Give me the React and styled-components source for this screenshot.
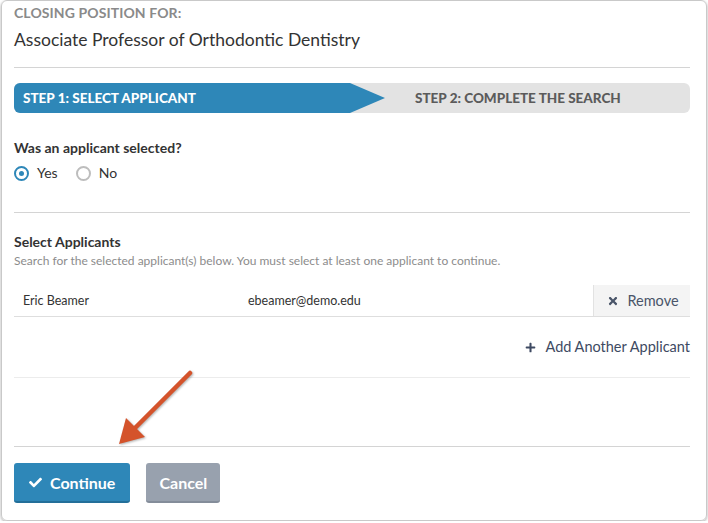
import React from 'react'
import styled, { createGlobalStyle } from 'styled-components'
import { FaCheck, FaTimes, FaPlus } from 'react-icons/fa'

const GlobalStyle = createGlobalStyle`
    body {
        margin: 0;
        background: #ffffff;
        font-family: Lato, "Open Sans", sans-serif;
        color: #333;
    }
`

const Card = styled.div`
    position: relative;
    box-sizing: border-box;
    width: 706px;
    height: 521px;
    margin-left: 1px;
    border: 1px solid #c9c9c9;
    border-radius: 6px;
    box-shadow: 0 1px 3px rgba(0, 0, 0, 0.35);
    padding: 4px 16px 0 12px;
    display: flex;
    flex-direction: column;
`

const Eyebrow = styled.div`
    font-size: 14px;
    font-weight: 700;
    color: #8a8a8a;
    line-height: 16px;
    letter-spacing: 0.1px;
`

const Title = styled.h1`
    margin: 8px 0 0;
    font-size: 17.5px;
    font-weight: 400;
    line-height: 22px;
    color: #333;
`

const Rule = styled.hr`
    border: none;
    border-top: 1px solid ${p => p.light ? '#ececec' : '#d4d4d4'};
    margin: ${p => p.mt}px 0 0;
`

const Steps = styled.div`
    margin-top: 15px;
    height: 30px;
    background: #e3e3e3;
    border-radius: 6px;
    overflow: hidden;
    display: flex;
    align-items: center;
`

const ActiveStep = styled.div`
    height: 100%;
    width: 371px;
    background: #2e87b8;
    clip-path: polygon(0 0, 336px 0, 100% 50%, 336px 100%, 0 100%);
    display: flex;
    align-items: center;
    padding-left: 9px;
    box-sizing: border-box;
    font-size: 13.5px;
    font-weight: 900;
    color: #fff;
`

const NextStep = styled.div`
    padding-left: 30px;
    font-size: 13.5px;
    font-weight: 900;
    color: #5b5b5b;
`

const Question = styled.div`
    margin-top: 26px;
    font-size: 14px;
    font-weight: 700;
    line-height: 18px;
    color: #333;
`

const Radios = styled.div`
    margin-top: 7px;
    display: flex;
    gap: 18px;
`

const RadioLabel = styled.label`
    display: flex;
    align-items: center;
    gap: 8px;
    font-size: 14px;
    line-height: 18px;
    color: #333;
`

const Dot = styled.span`
    box-sizing: border-box;
    width: 15px;
    height: 15px;
    border-radius: 50%;
    border: 2px solid ${p => p.checked ? '#2e87b8' : '#bdbdbd'};
    display: flex;
    align-items: center;
    justify-content: center;

    &::after {
        content: '';
        width: 5px;
        height: 5px;
        border-radius: 50%;
        background: ${p => p.checked ? '#2e87b8' : 'transparent'};
    }
`

const SectionTitle = styled.div`
    margin-top: 20px;
    font-size: 14px;
    font-weight: 700;
    line-height: 18px;
    color: #333;
`

const Hint = styled.div`
    margin-top: 3px;
    font-size: 12px;
    line-height: 14px;
    color: #8c8c8c;
`

const ApplicantRow = styled.div`
    margin-top: 17px;
    height: 31px;
    display: grid;
    grid-template-columns: 234px 1fr 97px;
    align-items: stretch;
    border-bottom: 1px solid #dedede;
    font-size: 12.5px;
    color: #333;
`

const Cell = styled.div`
    display: flex;
    align-items: center;
    padding-left: ${p => p.pad || 0}px;
`

const RemoveCell = styled.button`
    border: none;
    border-left: 1px solid #e2e2e2;
    background: #f4f4f4;
    display: flex;
    align-items: center;
    justify-content: center;
    gap: 8px;
    font-family: inherit;
    font-size: 14.5px;
    color: #4a5569;
    padding: 0 0 0 2px;

    svg {
        width: 12px;
        height: 12px;
    }
`

const AddLink = styled.div`
    margin-top: 21px;
    align-self: flex-end;
    display: flex;
    align-items: center;
    gap: 9px;
    font-size: 14.5px;
    line-height: 18px;
    color: #3e4a62;

    svg {
        width: 11px;
        height: 11px;
    }
`

const Actions = styled.div`
    margin-top: 16px;
    display: flex;
    gap: 16px;
`

const Button = styled.button`
    box-sizing: border-box;
    height: 40px;
    padding: 0 ${p => p.primary ? 15 : 13}px;
    border: none;
    border-bottom: 2px solid ${p => p.primary ? '#236f99' : '#848d9a'};
    border-radius: 3px;
    background: ${p => p.primary ? '#2e87b8' : '#98a1ae'};
    color: #fff;
    font-family: inherit;
    font-size: 16px;
    font-weight: 700;
    display: flex;
    align-items: center;
    gap: 8px;

    svg {
        width: 13px;
        height: 13px;
    }
`

const Arrow = styled.svg`
    position: absolute;
    left: 100px;
    top: 362px;
    overflow: visible;
    filter: drop-shadow(1px 1px 1px rgba(0, 0, 0, 0.3));
`

export default function App() {
    return (
        <>
            <GlobalStyle />
            <Card>
                <Eyebrow>CLOSING POSITION FOR:</Eyebrow>
                <Title>Associate Professor of Orthodontic Dentistry</Title>
                <Rule mt={16} />
                <Steps>
                    <ActiveStep>STEP 1: SELECT APPLICANT</ActiveStep>
                    <NextStep>STEP 2: COMPLETE THE SEARCH</NextStep>
                </Steps>
                <Question>Was an applicant selected?</Question>
                <Radios>
                    <RadioLabel><Dot checked />Yes</RadioLabel>
                    <RadioLabel><Dot />No</RadioLabel>
                </Radios>
                <Rule mt={30} />
                <SectionTitle>Select Applicants</SectionTitle>
                <Hint>Search for the selected applicant(s) below. You must select at least one applicant to continue.</Hint>
                <ApplicantRow>
                    <Cell pad={9}>Eric Beamer</Cell>
                    <Cell>ebeamer@demo.edu</Cell>
                    <RemoveCell><FaTimes />Remove</RemoveCell>
                </ApplicantRow>
                <AddLink><FaPlus />Add Another Applicant</AddLink>
                <Rule light mt={21} />
                <Rule mt={68} />
                <Actions>
                    <Button primary><FaCheck />Continue</Button>
                    <Button>Cancel</Button>
                </Actions>
                <Arrow width="100" height="90" viewBox="0 0 100 90">
                    <line x1="88" y1="10" x2="30" y2="68" stroke="#d4532b" strokeWidth="4.5" strokeLinecap="round" />
                    <polygon points="17,81 24,55 43,74" fill="#d4532b" />
                </Arrow>
            </Card>
        </>
    )
}
